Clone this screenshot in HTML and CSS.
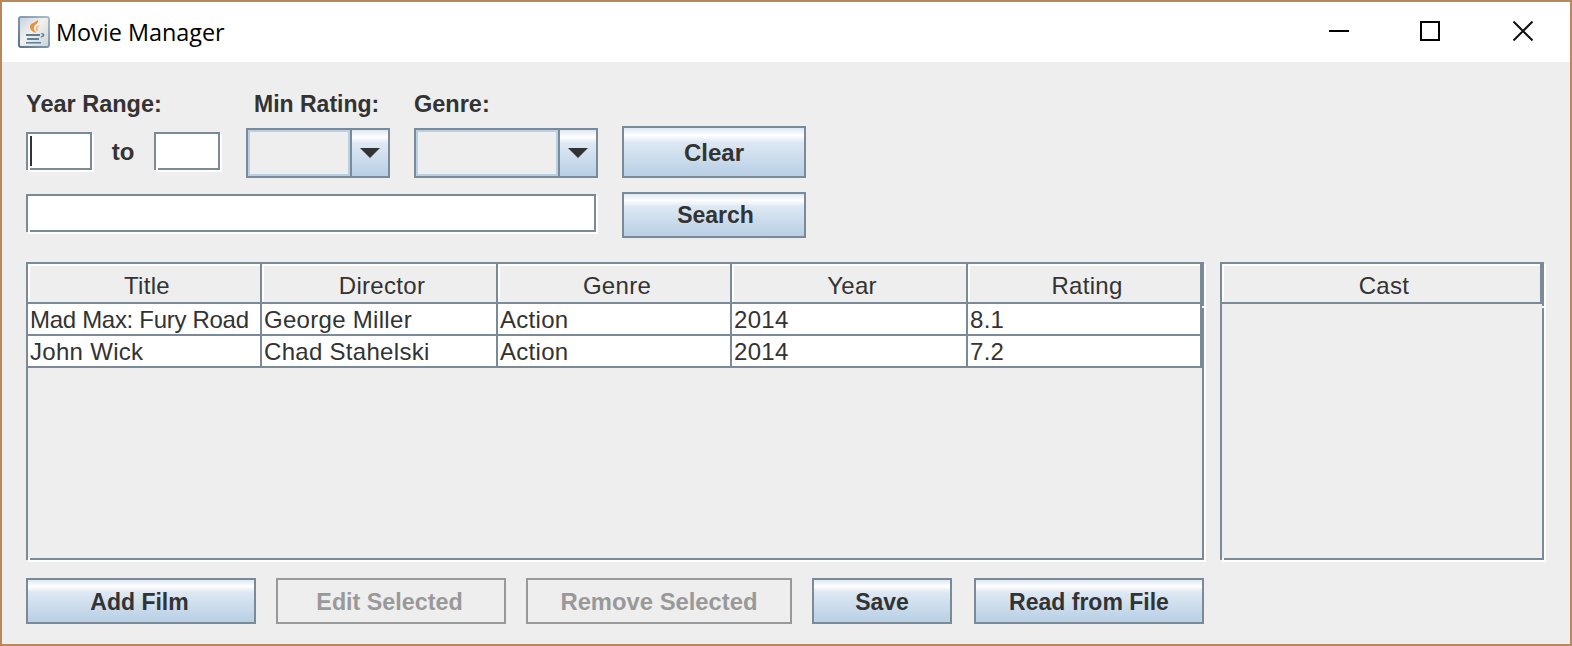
FILE: index.html
```html
<!DOCTYPE html>
<html lang="en">
<head>
    <meta charset="UTF-8">
    <title>Movie Manager</title>
    <link rel="stylesheet" href="styles.css">
</head>
<body>
    <div class="window">
        <div class="titlebar">
            <svg class="app-icon" width="32" height="32" viewBox="0 0 32 32">
                <defs>
                    <linearGradient id="iconbg" x1="0" y1="0" x2="1" y2="1">
                        <stop offset="0" stop-color="#c4d2de"/>
                        <stop offset="0.45" stop-color="#f1f0ec"/>
                        <stop offset="1" stop-color="#ccd4d9"/>
                    </linearGradient>
                    <linearGradient id="iconedge" x1="1" y1="0" x2="0" y2="1">
                        <stop offset="0" stop-color="#a9bccb"/>
                        <stop offset="1" stop-color="#577388"/>
                    </linearGradient>
                </defs>
                <rect x="1" y="1" width="30" height="30" rx="2" fill="url(#iconbg)" stroke="url(#iconedge)" stroke-width="2"/>
                <path d="M20 4c1 3-3 4.500-4 7-.6 1.600.3 3.500 2 6-3.400-1.200-6.500-3.600-6-6.800C12.500 7.200 17.500 6.500 20 4z" fill="#ea913a"/>
                <path d="M22 9c-1.600 1.300-2.800 2.200-2.300 4.600.2.900-.3 1.900-.9 2.400.1-1-.9-2-1-3.300-.1-2.200 2.200-3 4.200-3.700z" fill="#f2b06c"/>
                <path d="M8 18h14v2H8zM9 22h12v2H9zM8 26h15v1.600H8z" fill="#5f7f98"/>
                <path d="M22.500 17.500c3-.8 4.800.6 3.600 2.400-.8 1-2 1.400-3.600 1.700l.5-1.300c1.600-.2 2.600-1.500.7-1.700z" fill="#5f7f98"/>
            </svg>
            <span class="app-title">Movie Manager</span>
            <div class="controls">
                <div class="control">
                    <svg width="20" height="20" viewBox="0 0 20 20"><path d="M0 10h20" stroke="#000" stroke-width="2" fill="none"/></svg>
                </div>
                <div class="control control-max">
                    <svg width="20" height="20" viewBox="0 0 20 20"><rect x="1" y="1" width="18" height="18" stroke="#000" stroke-width="2" fill="none"/></svg>
                </div>
                <div class="control">
                    <svg width="20" height="20" viewBox="0 0 20 20"><path d="M0.500 0.500l19 19M19.500 0.500l-19 19" stroke="#111" stroke-width="2" fill="none"/></svg>
                </div>
            </div>
        </div>

        <div class="content">
            <div class="filters">
                <label class="label">Year Range:</label>
                <label class="label min-label">Min Rating:</label>
                <label class="label">Genre:</label>
                <div></div>

                <div class="year-range">
                    <div class="field short"><span class="caret"></span></div>
                    <span class="label to">to</span>
                    <div class="field short"></div>
                </div>
                <div class="combo">
                    <div class="combo-value"></div>
                    <div class="combo-arrow"><span class="arrow"></span></div>
                </div>
                <div class="combo">
                    <div class="combo-value"></div>
                    <div class="combo-arrow"><span class="arrow"></span></div>
                </div>
                <button class="btn clear">Clear</button>

                <div class="field search"></div>
                <button class="btn search-btn">Search</button>
            </div>

            <div class="tables">
                <div class="panel movies">
                    <table class="grid">
                        <colgroup>
                            <col class="col-a"><col class="col-b"><col class="col-a"><col class="col-b"><col class="col-a">
                        </colgroup>
                        <thead>
                            <tr><th>Title</th><th>Director</th><th>Genre</th><th>Year</th><th>Rating</th></tr>
                        </thead>
                        <tbody>
                            <tr><td class="tight">Mad Max: Fury Road</td><td>George Miller</td><td>Action</td><td>2014</td><td>8.1</td></tr>
                            <tr><td>John Wick</td><td>Chad Stahelski</td><td>Action</td><td>2014</td><td>7.2</td></tr>
                        </tbody>
                    </table>
                </div>
                <div class="panel cast">
                    <table class="grid">
                        <thead>
                            <tr><th>Cast</th></tr>
                        </thead>
                    </table>
                </div>
            </div>

            <div class="actions">
                <button class="btn add">Add Film</button>
                <button class="btn edit" disabled>Edit Selected</button>
                <button class="btn remove" disabled>Remove Selected</button>
                <button class="btn save">Save</button>
                <button class="btn read">Read from File</button>
            </div>
        </div>
    </div>
</body>
</html>
```

FILE: styles.css
```css
/* Page and window frame */
html, body {
    margin: 0;
    padding: 0;
}

.window {
    box-sizing: border-box;
    width: 1572px;
    height: 646px;
    border: 2px solid #b9875a;
    background: #eeeeee;
    color: #333333;
    font-family: "Liberation Sans", Arial, sans-serif;
    font-size: 24px;
}

/* Title bar */
.titlebar {
    display: flex;
    align-items: center;
    height: 60px;
    background: #ffffff;
    padding-left: 16px;
}

.app-icon {
    margin-top: -1px;
}

.app-title {
    margin-left: 6px;
    font-family: "Open Sans", sans-serif;
    font-size: 23.4px;
    color: #000000;
}

.controls {
    display: flex;
    margin-left: auto;
    margin-right: 1px;
}

.control {
    display: flex;
    align-items: center;
    justify-content: center;
    width: 92px;
    height: 60px;
    margin-top: -2px;
}

.control-max {
    width: 90px;
    margin-right: 2px;
}

/* Main area */
.content {
    padding: 28px 24px 0;
}

.filters {
    display: grid;
    grid-template-columns: 196px 144px 184px 184px;
    grid-template-rows: 36px 52px 60px;
    column-gap: 24px;
}

.label {
    font-size: 23.5px;
    font-weight: bold;
    line-height: 28px;
}

.min-label {
    margin-left: 8px;
    font-size: 23px;
}

.year-range {
    display: flex;
    align-items: flex-start;
    height: 52px;
    padding-top: 6px;
    box-sizing: border-box;
}

.to {
    width: 62px;
    padding-top: 6px;
    font-size: 24px;
    text-align: center;
}

/* Etched text fields */
.field {
    position: relative;
    box-sizing: border-box;
    border: 2px solid #7a8a99;
    background: #ffffff;
    box-shadow: 2px 2px 0 #ffffff;
}

/* Gap in the bottom line, from the etched border */
.field::after, .panel::after {
    content: "";
    position: absolute;
    left: 0;
    bottom: -2px;
    width: 2px;
    height: 2px;
    background: #ffffff;
}

.short {
    width: 66px;
    height: 38px;
    padding: 2px 0 0 2px;
}

.caret {
    display: block;
    width: 2px;
    height: 30px;
    background: #333333;
}

.search {
    grid-column: 1 / span 3;
    width: 570px;
    height: 38px;
    margin-top: 16px;
}

/* Combo boxes */
.combo {
    display: flex;
    box-sizing: border-box;
    height: 50px;
    margin-top: 2px;
    border: 2px solid #7a8a99;
}

.combo-value {
    flex: 1;
    border: 2px solid #b8cfe5;
    background: #eeeeee;
}

.combo-arrow {
    display: flex;
    align-items: center;
    justify-content: center;
    width: 36px;
    border-left: 2px solid #7a8a99;
    background: linear-gradient(#dde8f3 0, #ffffff 15%, #dde8f3 30%, #b8cfe5 100%);
}

.arrow {
    width: 0;
    height: 0;
    border-left: 10px solid transparent;
    border-right: 10px solid transparent;
    border-top: 10px solid #333333;
}

/* Buttons */
.btn {
    box-sizing: border-box;
    height: 52px;
    padding: 2px 0 0;
    border: 2px solid #7a8a99;
    background: linear-gradient(#dde8f3 0, #ffffff 15%, #dde8f3 30%, #b8cfe5 100%);
    color: #333333;
    font-family: "Liberation Sans", Arial, sans-serif;
    font-size: 23px;
    font-weight: bold;
}

.btn:disabled {
    border-color: #999999;
    background: #eeeeee;
    color: #999999;
}

.clear {
    font-size: 24px;
}

.search-btn {
    align-self: end;
    height: 46px;
    padding: 0 0 0 3px;
}

/* Tables */
.tables {
    display: flex;
    gap: 16px;
    margin-top: 24px;
}

.panel {
    position: relative;
    box-sizing: border-box;
    height: 298px;
    border: 2px solid #7a8a99;
    box-shadow: 2px 2px 0 #ffffff;
}

/* Small white tick on the right edge, just under the header */
.panel::before {
    content: "";
    position: absolute;
    right: -2px;
    top: 42px;
    width: 2px;
    height: 2px;
    background: #ffffff;
}

.movies {
    width: 1178px;
}

.cast {
    width: 324px;
}

.grid {
    width: 100%;
    table-layout: fixed;
    border-collapse: separate;
    border-spacing: 0;
    font-size: 24px;
    letter-spacing: 0.3px;
}

.col-a {
    width: 234px;
}

.col-b {
    width: 236px;
}

.grid th {
    box-sizing: border-box;
    height: 40px;
    padding: 6px 0 0 6px;
    border-right: 2px solid #7a8a99;
    border-bottom: 2px solid #7a8a99;
    background: #eeeeee;
    box-shadow: inset 2px 2px 0 #ffffff;
    font-weight: normal;
    text-align: center;
}

.grid td {
    box-sizing: border-box;
    height: 32px;
    padding: 2px 0 0 2px;
    border-right: 2px solid #7a8a99;
    border-bottom: 2px solid #7a8a99;
    background: #ffffff;
    white-space: nowrap;
}

.grid .tight {
    letter-spacing: -0.3px;
}

/* Bottom button row */
.actions {
    display: flex;
    margin-top: 18px;
}

.actions .btn {
    height: 46px;
}

.add, .edit {
    width: 230px;
    margin-right: 20px;
}

.actions .add {
    padding-right: 3px;
}

.actions .edit {
    padding-right: 3px;
    font-size: 23.3px;
}

.actions .remove {
    width: 266px;
    margin-right: 20px;
    font-size: 23.8px;
}

.save {
    width: 140px;
    margin-right: 22px;
}

.read {
    width: 230px;
}
```
